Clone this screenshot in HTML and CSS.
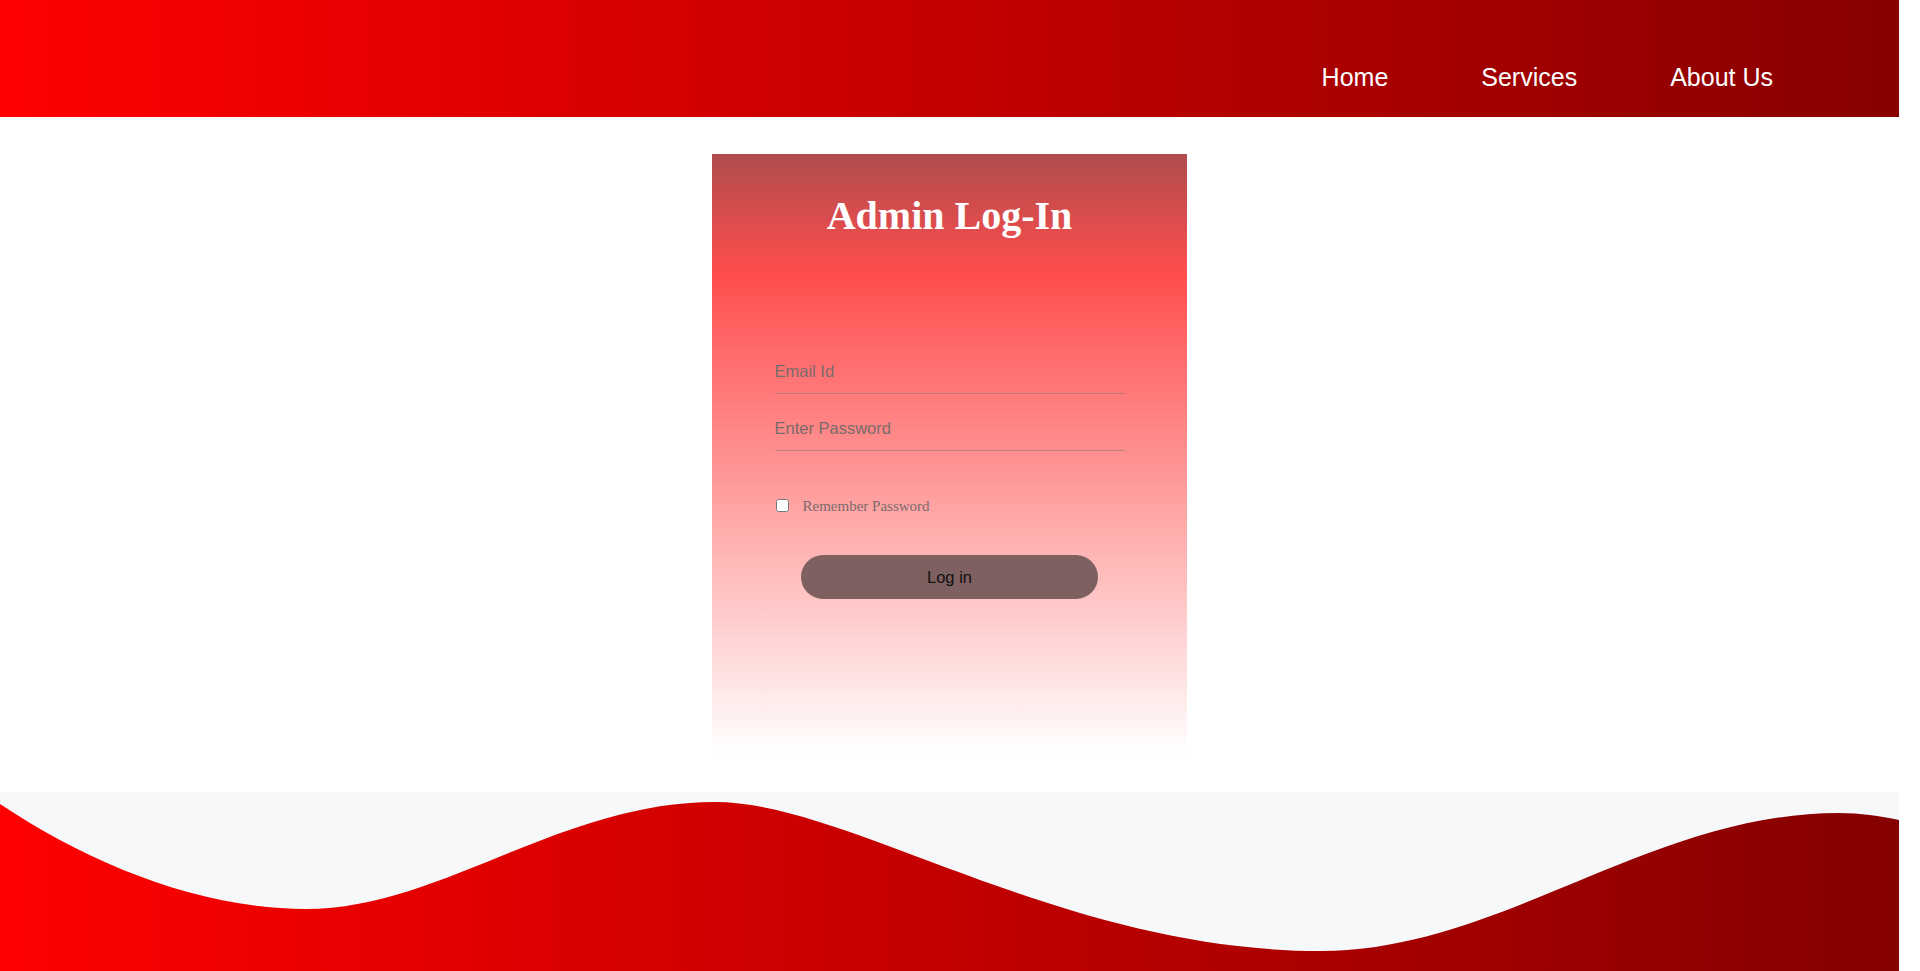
FILE: index.html
```html
<!DOCTYPE html>
<html lang="en">
<head>
<meta charset="utf-8">
<title>Admin Log-In</title>
<link rel="stylesheet" href="styles.css">
</head>
<body>
<div class="page">
  <header class="topbar">
    <nav class="nav">
      <a class="nav-link" href="#">Home</a>
      <a class="nav-link" href="#">Services</a>
      <a class="nav-link" href="#">About Us</a>
    </nav>
  </header>

  <main class="main">
    <form class="card">
      <h1 class="card-title">Admin Log-In</h1>
      <div class="fields">
        <input class="field" type="email" placeholder="Email Id">
        <input class="field" type="password" placeholder="Enter Password">
      </div>
      <label class="remember">
        <input class="remember-box" type="checkbox">
        <span class="remember-text">Remember Password</span>
      </label>
      <button class="login-btn" type="button">Log in</button>
    </form>
  </main>

  <footer class="footer">
    <svg class="wave" viewBox="0 0 1899 180" preserveAspectRatio="none" aria-hidden="true">
      <defs>
        <linearGradient id="waveGrad" x1="0" y1="0" x2="1" y2="0">
          <stop offset="0" stop-color="#ff0000"/>
          <stop offset="1" stop-color="#850000"/>
        </linearGradient>
      </defs>
      <path fill="url(#waveGrad)" d="M0,12 C90,72 200,117 306,117 C440,117 560,10 715,10 C850,10 1060,159 1321,159 C1500,159 1650,21 1839,21 C1860,21 1880,24 1899,28 L1899,180 L0,180 Z"/>
    </svg>
  </footer>
</div>
</body>
</html>
```

FILE: styles.css
```css
html, body {
  margin: 0;
  padding: 0;
  background: #ffffff;
}

body {
  font-family: "Liberation Sans", Arial, sans-serif;
  overflow: hidden;
}

.page {
  width: 1899px;
  display: flex;
  flex-direction: column;
}

.topbar {
  height: 117px;
  background: linear-gradient(to right, #ff0000, #880000);
  display: flex;
  justify-content: flex-end;
  box-sizing: border-box;
  padding: 63px 126px 0 0;
}

.nav {
  display: flex;
  gap: 93px;
  align-items: flex-start;
}

.nav-link {
  color: #ffffff;
  text-decoration: none;
  font-size: 25px;
  line-height: 29px;
}

.main {
  display: flex;
  justify-content: center;
  padding: 37px 0 38px;
}

.card {
  width: 475px;
  height: 600px;
  box-sizing: border-box;
  background: linear-gradient(to bottom, #b04c4c 0%, #ff4d4d 20%, #ffffff 100%);
  display: flex;
  flex-direction: column;
  align-items: center;
  padding-top: 39px;
}

.card-title {
  margin: 0;
  font-family: "Liberation Serif", "Times New Roman", serif;
  font-weight: bold;
  font-size: 40px;
  line-height: 46px;
  color: #ffffff;
}

.fields {
  display: flex;
  flex-direction: column;
  gap: 15px;
  margin-top: 113px;
}

.field {
  width: 350px;
  box-sizing: border-box;
  border: none;
  border-bottom: 1px solid rgba(130, 120, 120, 0.55);
  background: transparent;
  padding: 10px 0 12px;
  font-family: "Liberation Sans", Arial, sans-serif;
  font-size: 16.5px;
  line-height: 19px;
  color: #333;
  outline: none;
}

.field::placeholder {
  color: #7a6b6b;
}

.remember {
  width: 350px;
  display: flex;
  align-items: center;
  margin-top: 44px;
  font-family: "Liberation Serif", "Times New Roman", serif;
  font-size: 15px;
  color: #7a6b6b;
}

.remember-box {
  width: 13px;
  height: 13px;
  margin: 0 14px 0 1px;
}

.remember-text {
  line-height: 17px;
  padding-top: 3px;
}

.login-btn {
  margin-top: 40px;
  width: 297px;
  height: 44px;
  border: none;
  border-radius: 22px;
  background: #7f6060;
  color: #111;
  font-family: "Liberation Sans", Arial, sans-serif;
  font-size: 16.5px;
}

.footer {
  height: 180px;
  background: #f7f8fa;
  display: flex;
}

.wave {
  width: 100%;
  height: 180px;
  display: block;
}
```
